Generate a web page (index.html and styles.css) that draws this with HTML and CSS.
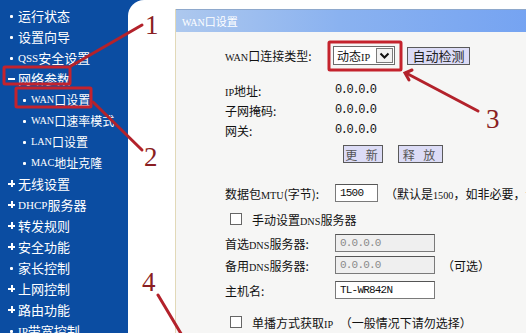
FILE: index.html
```html
<!DOCTYPE html>
<html lang="zh-CN">
<head>
  <meta charset="utf-8">
  <title>WAN口设置</title>
  <link rel="stylesheet" href="styles.css">
</head>
<body>

  <div class="page">
    <ul class="nav">
      <li class="nav-item"><span class="mark dot"></span>运行状态</li>
      <li class="nav-item"><span class="mark dot"></span>设置向导</li>
      <li class="nav-item"><span class="mark dot"></span><span class="lat">QSS</span>安全设置</li>
      <li class="nav-item"><span class="mark minus"></span>网络参数</li>
      <li class="nav-item sub"><span class="mark dot"></span><span class="lat">WAN</span>口设置</li>
      <li class="nav-item sub"><span class="mark dot"></span><span class="lat">WAN</span>口速率模式</li>
      <li class="nav-item sub"><span class="mark dot"></span><span class="lat">LAN</span>口设置</li>
      <li class="nav-item sub"><span class="mark dot"></span><span class="lat">MAC</span>地址克隆</li>
      <li class="nav-item"><span class="mark plus"></span>无线设置</li>
      <li class="nav-item"><span class="mark plus"></span><span class="lat">DHCP</span>服务器</li>
      <li class="nav-item"><span class="mark plus"></span>转发规则</li>
      <li class="nav-item"><span class="mark plus"></span>安全功能</li>
      <li class="nav-item"><span class="mark dot"></span>家长控制</li>
      <li class="nav-item"><span class="mark plus"></span>上网控制</li>
      <li class="nav-item"><span class="mark plus"></span>路由功能</li>
      <li class="nav-item"><span class="mark dot"></span><span class="lat">IP</span>带宽控制</li>
    </ul>

    <div class="main">
      <div class="panel">
        <div class="panel-head"><span class="lat">WAN</span>口设置</div>
        <div class="panel-body">

          <div class="row row-type">
            <span class="label"><span class="lat">WAN</span>口连接类型:</span>
            <span class="select">
              <span class="select-text">动态<span class="lat">IP</span></span>
              <span class="select-arrow">
                <svg width="11" height="8" viewBox="0 0 11 8"><path d="M1.5 1.5 L5.5 5.5 L9.5 1.5" fill="none" stroke="#111" stroke-width="2"/></svg>
              </span>
            </span>
            <span class="btn btn-detect">自动检测</span>
          </div>

          <div class="row row-ip">
            <span class="label"><span class="lat">IP</span>地址:</span>
            <span class="val">0.0.0.0</span>
          </div>
          <div class="row">
            <span class="label">子网掩码:</span>
            <span class="val">0.0.0.0</span>
          </div>
          <div class="row">
            <span class="label">网关:</span>
            <span class="val">0.0.0.0</span>
          </div>

          <div class="row row-btns">
            <span class="label"></span>
            <span class="btn btn-renew">更 新</span>
            <span class="btn btn-release">释 放</span>
          </div>

          <div class="row row-mtu">
            <span class="label">数据包<span class="lat">MTU</span>(字节):</span>
            <span class="input input-short">1500</span>
            <span class="note">（默认是<span class="lat">1500</span>，如非必要，请勿修改）</span>
          </div>

          <div class="row row-check">
            <span class="check"></span>
            <span>手动设置<span class="lat">DNS</span>服务器</span>
          </div>

          <div class="row row-dns1">
            <span class="label">首选<span class="lat">DNS</span>服务器:</span>
            <span class="input input-long disabled">0.0.0.0</span>
          </div>
          <div class="row row-dns2">
            <span class="label">备用<span class="lat">DNS</span>服务器:</span>
            <span class="input input-long disabled">0.0.0.0</span>
            <span class="note">（可选）</span>
          </div>

          <div class="row row-host">
            <span class="label">主机名:</span>
            <span class="input input-long">TL-WR842N</span>
          </div>

          <div class="row row-check row-unicast">
            <span class="check"></span>
            <span>单播方式获取<span class="lat">IP</span> <span class="note-inline">（一般情况下请勿选择）</span></span>
          </div>

        </div>
      </div>
    </div>
  </div>

  <!-- 标注：红框、箭头和数字 -->
  <svg class="marks" width="526" height="333" viewBox="0 0 526 333">
    <g fill="none" stroke="#c4232d" stroke-width="3">
      <rect x="4" y="67" width="66" height="17" rx="1"/>
      <rect x="16" y="88" width="75" height="19" rx="1"/>
      <rect x="329" y="42" width="72" height="28" rx="1"/>
    </g>
    <g fill="none" stroke="#b3222b" stroke-width="3" stroke-linecap="round">
      <line x1="142" y1="25" x2="71" y2="66"/>
      <line x1="93" y1="102" x2="142" y2="150"/>
      <line x1="478" y1="111" x2="406" y2="73"/>
      <path d="M412 70 L405 73 L409 80"/>
      <line x1="158" y1="295" x2="186" y2="342"/>
    </g>
    <g class="num" fill="#8a1e22">
      <text x="145" y="34">1</text>
      <text x="144" y="166">2</text>
      <text x="486" y="128">3</text>
      <text x="142" y="291">4</text>
    </g>
  </svg>

</body>
</html>
```

FILE: styles.css
```css
/* 页面整体 */
body {
  margin: 0;
  width: 526px;
  height: 333px;
  overflow: hidden;
  position: relative;
  background-color: #0b4da2;
  font-family: "Noto Sans CJK SC", "Liberation Sans", sans-serif;
  font-size: 12px;
  color: #111;
}

.page {
  display: flex;
  height: 333px;
}

/* 左侧菜单 */
.nav {
  list-style: none;
  margin: 0;
  padding: 5px 0 0;
  width: 128px;
  flex: none;
  background-color: #0b4da2;
}

.nav-item {
  display: flex;
  align-items: center;
  height: 21px;
  padding-left: 8px;
  color: #fff;
  font-size: 13px;
  white-space: nowrap;
}

.nav-item.sub {
  padding-left: 21px;
  font-size: 12px;
}

.lat {
  font-family: "Liberation Serif", "DejaVu Serif", serif;
  font-size: 0.85em;
}

.mark {
  width: 10px;
  height: 10px;
  flex: none;
  position: relative;
}

.mark::before,
.mark::after {
  content: "";
  position: absolute;
  background: #fff;
}

.mark.dot::before {
  left: 2px;
  top: 4px;
  width: 3px;
  height: 3px;
  border-radius: 1px;
}

.mark.minus::before,
.mark.plus::before {
  left: 0;
  top: 4px;
  width: 7px;
  height: 2px;
}

.mark.plus::after {
  left: 2.5px;
  top: 1.5px;
  width: 2px;
  height: 7px;
}

/* 右侧内容 */
.main {
  flex: 1;
  background: #fff;
  border-top-left-radius: 16px;
  padding: 9px 0 0 47px;
}

.panel {
  height: 100%;
  border-left: 1px solid #e2d9b8;
  background: #f6f6f5;
}

.panel-head {
  height: 22px;
  line-height: 22px;
  border-top: 1px solid #8ea8cc;
  padding-left: 6px;
  color: #fff;
  font-size: 11px;
  background: linear-gradient(to right, #adc8ee, #8ab2f0 40%, #6f9ff2);
}

.panel-head .lat {
  font-size: 10px;
}

.panel-body {
  padding: 13px 0 0 49px;
}

.row {
  display: flex;
  align-items: center;
  height: 20px;
  white-space: nowrap;
}

.label {
  width: 110px;
  flex: none;
}

.val {
  font-family: "Liberation Mono", "DejaVu Sans Mono", monospace;
  font-size: 12px;
  letter-spacing: -1.4px;
}

.row-type { height: 21px; }
.row-ip { margin-top: 14px; }
.row-btns { margin-top: 4px; }
.row-mtu { margin-top: 19px; }
.row-check { margin-top: 6px; padding-left: 5px; }
.row-dns1 { margin-top: 4px; }
.row-dns2 { margin-top: 2px; }
.row-host { margin-top: 5px; }
.row-unicast { margin-top: 12px; }

/* 下拉框 */
.select {
  display: flex;
  align-items: center;
  margin-left: -2px;
  height: 17px;
  border: 1px solid #6b6b6b;
  background: #fff;
}

.select-text {
  padding: 0 2px 0 3px;
  width: 36px;
}

.select-arrow {
  display: flex;
  align-items: center;
  justify-content: center;
  width: 15px;
  height: 13px;
  margin: 0 1px;
  border: 1px solid #7a7a7a;
  background: #f2f2f2;
}

/* 按钮 */
.btn {
  display: flex;
  align-items: center;
  justify-content: center;
  height: 16px;
  border: 1px solid #5a5a5a;
  background: #dcdcf6;
  color: #222;
  font-size: 12px;
}

.btn-detect {
  width: 61px;
  margin-left: 12px;
  font-size: 13px;
}

.btn-renew {
  width: 38px;
  margin-left: 8px;
  color: #555;
  letter-spacing: 3px;
}

.btn-release {
  width: 43px;
  margin-left: 15px;
  color: #555;
  letter-spacing: 3px;
}

/* 输入框 */
.input {
  display: flex;
  align-items: center;
  height: 16px;
  padding-left: 4px;
  border: 1px solid #7a7a7a;
  border-top-color: #555;
  background: #fff;
  font-family: "Liberation Mono", "DejaVu Sans Mono", monospace;
  font-size: 11px;
  letter-spacing: -0.8px;
  box-sizing: border-box;
  height: 18px;
}

.input-short { width: 43px; }
.input-long { width: 100px; }

.input.disabled {
  background: #efefef;
  color: #8a8a8a;
}

.note {
  margin-left: 7px;
}

.note-inline {
  margin-left: 4px;
}

.check {
  width: 12px;
  height: 12px;
  margin-right: 10px;
  border: 1px solid #666;
  background: #fff;
  box-sizing: border-box;
}

/* 标注层 */
.marks {
  position: absolute;
  left: 0;
  top: 0;
  pointer-events: none;
}

.num text {
  font-family: "Liberation Serif", serif;
  font-size: 27px;
}
```
